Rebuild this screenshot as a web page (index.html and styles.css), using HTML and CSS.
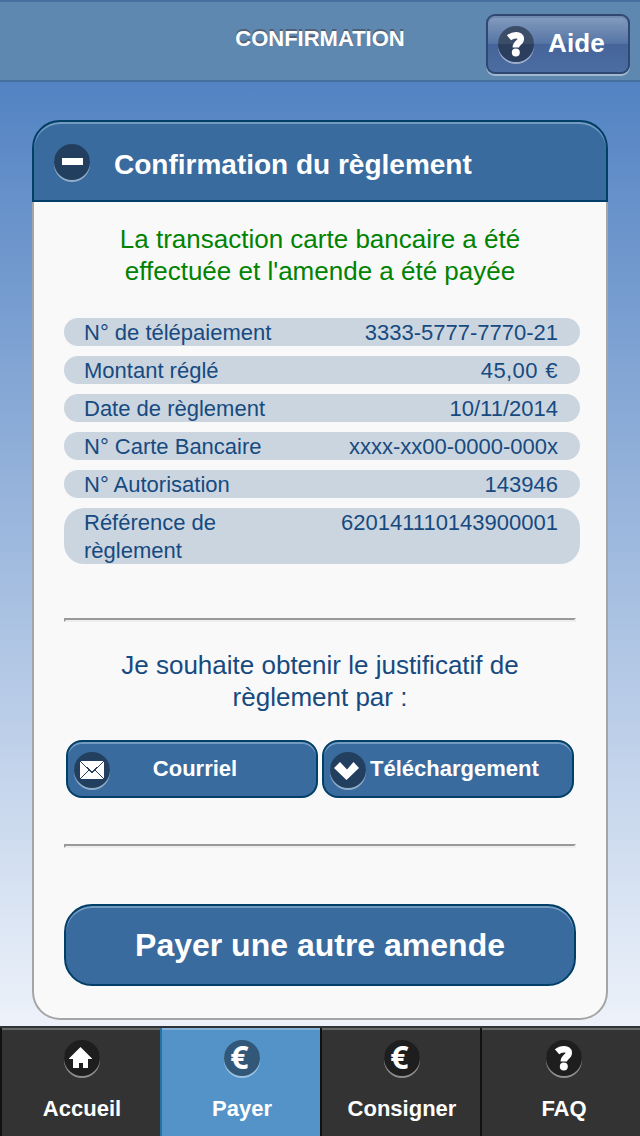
FILE: index.html
```html
<!DOCTYPE html>
<html lang="fr">
<head>
<meta charset="utf-8">
<title>Confirmation</title>
<link rel="stylesheet" href="styles.css">
</head>
<body>
<header class="topbar">
  <h1 class="topbar-title">CONFIRMATION</h1>
  <a class="help"><span class="disc"><svg width="36" height="36"><path d="M11 11.800C15 8.300 22.800 8 22.800 12.700C22.800 17 17.800 16.500 17.800 21.600" fill="none" stroke="#fff" stroke-width="6.500"/><circle cx="17.800" cy="26.500" r="4" fill="#fff"/></svg></span><span class="help-label">Aide</span></a>
</header>
<main class="content">
  <section class="card">
    <div class="card-head">
      <span class="disc"><svg width="36" height="36"><rect x="8" y="14" width="21" height="7" fill="#fff"/></svg></span>
      <h2 class="card-title">Confirmation du règlement</h2>
    </div>
    <div class="card-body">
      <p class="message success">La transaction carte bancaire a été<br>effectuée et l'amende a été payée</p>
      <dl class="rows">
        <div class="row"><dt>N° de télépaiement</dt><dd>3333-5777-7770-21</dd></div>
        <div class="row"><dt>Montant réglé</dt><dd class="amount">45,00 €</dd></div>
        <div class="row"><dt>Date de règlement</dt><dd>10/11/2014</dd></div>
        <div class="row"><dt>N° Carte Bancaire</dt><dd>xxxx-xx00-0000-000x</dd></div>
        <div class="row"><dt>N° Autorisation</dt><dd>143946</dd></div>
        <div class="row tall"><dt>Référence de<br>règlement</dt><dd>620141110143900001</dd></div>
      </dl>
      <hr class="rule">
      <p class="message ask">Je souhaite obtenir le justificatif de<br>règlement par :</p>
      <div class="actions">
        <a class="button"><span class="disc"><svg width="36" height="36" shape-rendering="crispEdges"><rect x="6" y="9" width="24" height="18" fill="#fff"/><path d="M6 9l12 11.500L30 9M6 27l9-9M30 27l-9-9" fill="none" stroke="#233f5f" stroke-width="1"/></svg></span><span class="button-label">Courriel</span></a>
        <a class="button"><span class="disc"><svg width="36" height="36"><path d="M4 16l6-6 7 7.500L23.500 10l5.500 6-12.500 12z" fill="#fff"/></svg></span><span class="button-label download">Téléchargement</span></a>
      </div>
      <hr class="rule">
      <a class="primary">Payer une autre amende</a>
    </div>
  </section>
</main>
<nav class="tabs">
  <a class="tab"><span class="disc"><svg width="36" height="36"><path d="M16.500 7L28 18.500V19h-4v9h-5v-5h-4v5H9v-9H5v-.500z" fill="#fff"/></svg></span><span class="tab-label">Accueil</span></a>
  <a class="tab active"><span class="disc euro">€</span><span class="tab-label">Payer</span></a>
  <a class="tab"><span class="disc euro">€</span><span class="tab-label">Consigner</span></a>
  <a class="tab last"><span class="disc"><svg width="36" height="36"><path d="M11 11.800C15 8.300 22.800 8 22.800 12.700C22.800 17 17.800 16.500 17.800 21.600" fill="none" stroke="#fff" stroke-width="6.500"/><circle cx="17.800" cy="26.500" r="4" fill="#fff"/></svg></span><span class="tab-label">FAQ</span></a>
</nav>
</body>
</html>
```
FILE: styles.css
```css
* { box-sizing: border-box; }
body {
  margin: 0;
  width: 640px;
  height: 1136px;
  display: flex;
  flex-direction: column;
  overflow: hidden;
  background: #e9eff8;
  font-family: "Liberation Sans", Arial, sans-serif;
}
h1, h2, p, dl, dt, dd { margin: 0; }
svg { display: block; }
.topbar {
  height: 82px;
  flex: none;
  display: grid;
  grid-template-columns: 1fr 154px;
  border-top: 2px solid #456f9f;
  border-bottom: 2px solid #456f9f;
  background: #5e88af;
}
.topbar-title {
  padding: 23px 0 0 154px;
  text-align: center;
  font-size: 22px;
  line-height: 28px;
  color: #fff;
  text-shadow: 0 -2px 0 #4f5f75;
}
.help {
  width: 144px;
  height: 60px;
  margin-top: 12px;
  display: flex;
  align-items: flex-start;
  padding: 10px 0 0 10px;
  gap: 14px;
  border: 2px solid #304872;
  border-radius: 9px;
  background: linear-gradient(#849cbd, #5675a6 49%, #45659a 50%, #4c6da2);
  box-shadow: 0 2px 0 #a0b8d0, inset 0 2px 0 #7189ae;
  color: #fff;
}
.help-label { font-weight: bold; font-size: 26px; line-height: 34px; letter-spacing: .1px; }
.disc {
  flex: none;
  width: 36px;
  height: 36px;
  border-radius: 50%;
  background: #233f5f;
  box-shadow: 0 2px 0 rgba(255, 255, 255, .45);
}
.help .disc { background: linear-gradient(#3c4d68 50%, #2b3e5d 50%); }
.euro { padding-right: 5px; font: 700 32px/34px "Open Sans", sans-serif; text-align: center; }
.content {
  height: 944px;
  flex: none;
  padding: 38px 32px 6px;
  background: linear-gradient(#5383c3, #edf2fa);
}
.card {
  height: 900px;
  display: flex;
  flex-direction: column;
}
.card-head {
  height: 82px;
  flex: none;
  display: flex;
  padding: 22px 20px 0;
  gap: 24px;
  border: 2px solid #023f67;
  border-radius: 28px 28px 0 0;
  background: #396b9e;
  box-shadow: inset 0 2px 0 #759bc1;
  color: #fff;
}
.card-title { font-size: 28px; line-height: 41px; }
.card-body {
  flex: 1;
  padding: 21px 26px 0 30px;
  border: 2px solid #a5a5a5;
  border-top: 0;
  border-radius: 0 0 28px 28px;
  background: #f9f9f9;
}
.message { margin-right: 4px; text-align: center; font-size: 26px; line-height: 32px; }
.success { color: #008300; }
.rows { display: flex; flex-direction: column; gap: 10px; margin: 31px 0 54px; }
.row {
  height: 28px;
  display: flex;
  justify-content: space-between;
  padding: 1px 22px 0 20px;
  border-radius: 14px;
  background: #cbd5df;
  color: #164a80;
  font-size: 22px;
  line-height: 28px;
}
.amount { letter-spacing: .4px; word-spacing: 1px; }
.tall { height: 56px; border-radius: 20px; }
.rule {
  margin: 0 4px 0 0;
  height: 4px;
  border: 2px solid;
  border-color: #999 #eee #eee #999;
}
.ask { margin-top: 27px; color: #164a80; }
.actions { display: flex; gap: 4px; margin: 27px 6px 46px 2px; }
.button {
  width: 252px;
  height: 58px;
  display: flex;
  align-items: flex-start;
  padding: 10px 6px 0;
  border: 2px solid #023f67;
  border-radius: 16px;
  background: #396b9e;
  box-shadow: inset 0 2px 0 #759bc1;
  color: #fff;
  font-weight: bold;
  font-size: 22px;
}
.button-label { flex: 1; margin-right: 30px; line-height: 34px; text-align: center; }
.download { flex: none; margin: 0 0 0 4px; }
.primary {
  display: block;
  width: 512px;
  height: 82px;
  margin-top: 56px;
  border: 2px solid #023f67;
  border-radius: 28px;
  background: #396b9e;
  box-shadow: inset 0 2px 0 #759bc1;
  color: #fff;
  text-align: center;
  font-weight: bold;
  font-size: 32px;
  line-height: 78px;
}
.tabs {
  height: 110px;
  flex: none;
  display: grid;
  grid-template-columns: repeat(4, 160px);
  border-top: 2px solid #303336;
  background: #333;
}
.tab {
  display: flex;
  flex-direction: column;
  align-items: center;
  padding: 12px 0 0 2px;
  border-left: 2px solid #111;
  background: #333;
  box-shadow: inset 0 2px 0 #666;
  color: #fff;
}
.tab .disc { background: #1e1e1e; }
.active { border-left-color: #2373a5; background: #5393c7; box-shadow: inset 0 2px 0 #83b2d9; }
.tab.active .disc { background: #315878; }
.last { padding-left: 6px; }
.tab-label { margin-top: 19px; font-weight: bold; font-size: 22px; line-height: 28px; }
```
